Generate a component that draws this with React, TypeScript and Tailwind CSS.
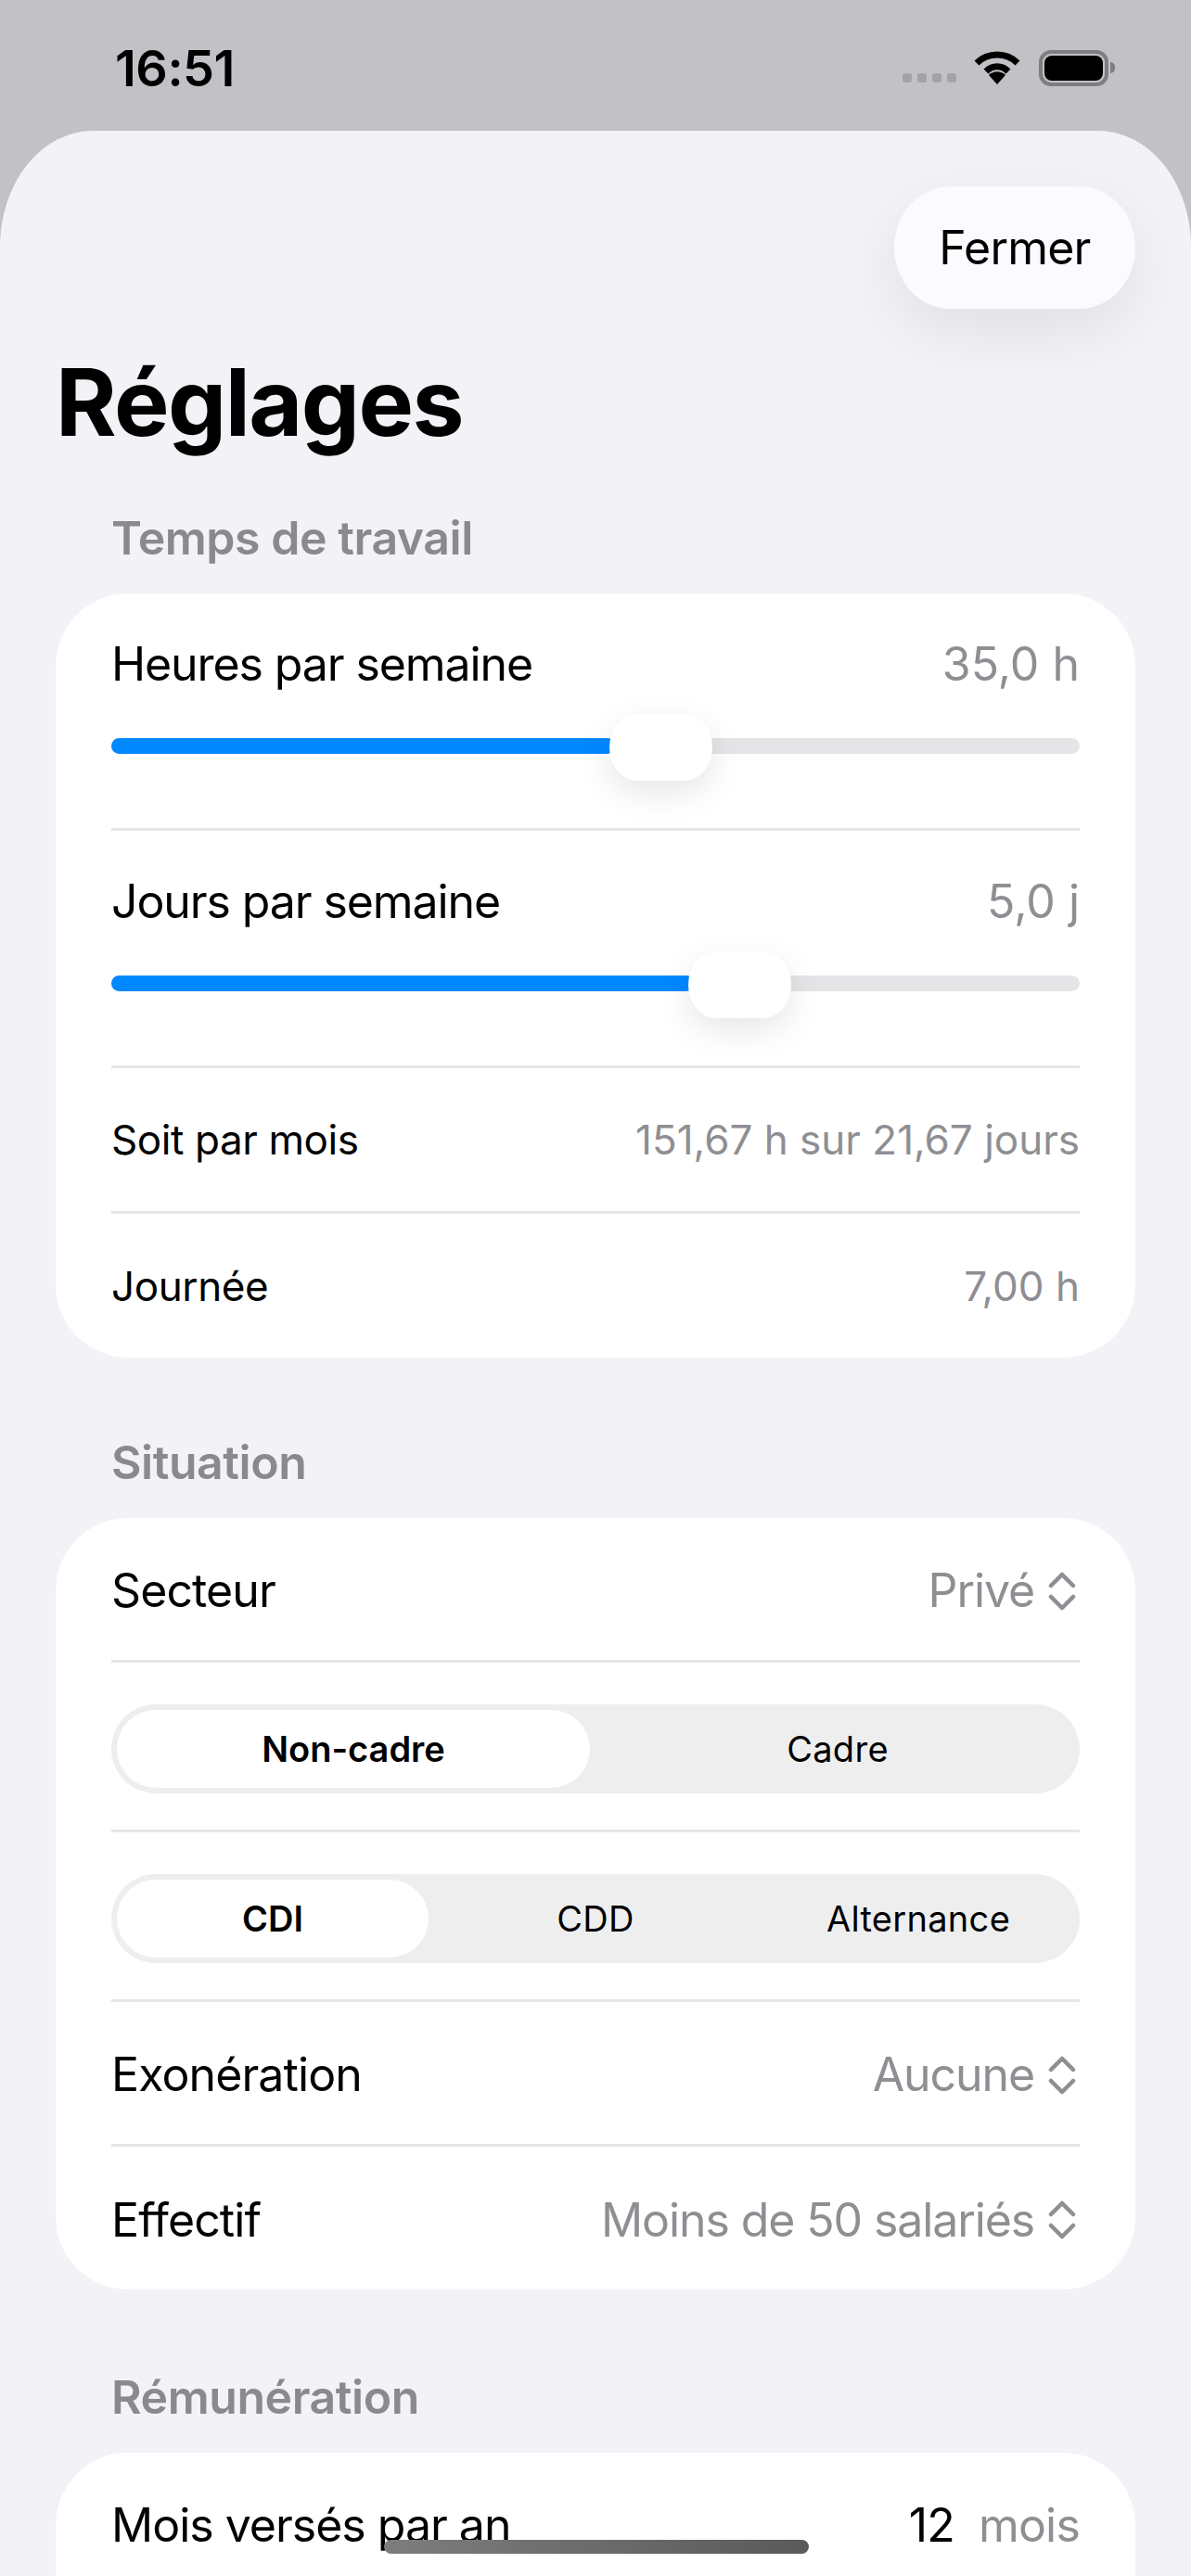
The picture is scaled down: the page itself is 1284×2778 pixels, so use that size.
import React from "react";

const font = { fontFamily: "Inter, 'Noto Sans', sans-serif" };

const Chevrons = () => (
  <svg width="30" height="42" viewBox="0 0 30 42" fill="none" stroke="#8e8e93" strokeWidth="4.5" strokeLinecap="round" strokeLinejoin="round" className="shrink-0">
    <path d="M3 15 L15 3 L27 15" />
    <path d="M3 27 L15 39 L27 27" />
  </svg>
);

const Divider = () => <div className="h-[3px] bg-[#e6e6e8]" />;

const SliderRow = ({ label, value, percent }: { label: string; value: string; percent: number }) => (
  <div className="h-[253px] pt-[46px]">
    <div className="flex h-[60px] items-center justify-between">
      <span className="text-[50px] text-black tracking-[-1.1px]">{label}</span>
      <span className="text-[50px] text-[#8e8e93] tracking-[0px]">{value}</span>
    </div>
    <div className="relative mt-[50px] h-[17px] rounded-full bg-[#e5e5e7]">
      <div className="h-full rounded-full bg-[#0088ff]" style={{ width: `${percent}%` }} />
      <div
        className="absolute top-[-26px] h-[72px] w-[111px] rounded-[30px/36px] bg-white shadow-[0_12px_36px_rgba(0,0,0,0.1)]"
        style={{ left: `${(percent / 100) * 1044 - 6}px` }}
      />
    </div>
  </div>
);

const InfoRow = ({ label, value, height }: { label: string; value: string; height: string }) => (
  <div className={`flex items-center justify-between ${height}`}>
    <span className="text-[44px] text-black tracking-[-0.4px]">{label}</span>
    <span className="text-[44px] text-[#8e8e93] tracking-[0px]">{value}</span>
  </div>
);

const PickerRow = ({ label, value, height }: { label: string; value: string; height: string }) => (
  <div className={`flex items-center justify-between pt-[4px] ${height}`}>
    <span className="text-[50px] text-black tracking-[-0.9px]">{label}</span>
    <span className="flex items-center gap-[15px] pr-[4px] text-[50px] text-[#8e8e93] tracking-[-1.1px]">
      {value}
      <Chevrons />
    </span>
  </div>
);

const Segmented = ({ items }: { items: string[] }) => (
  <div className="flex h-[180px] items-center pt-[6px]">
    <div className="flex h-[96px] w-full gap-[12px] rounded-[48px] bg-[#eeeeef] p-[6px]">
      {items.map((item, i) => (
        <div
          key={item}
          className={`flex flex-1 items-center justify-center rounded-[42px] text-[38px] text-black ${
            i === 0 ? "bg-white font-semibold" : "font-normal tracking-[0.3px]"
          }`}
        >
          {item}
        </div>
      ))}
    </div>
  </div>
);

const SectionLabel = ({ children }: { children: React.ReactNode }) => (
  <div className="mb-[29px] flex h-[60px] items-center pb-[2px] pl-[60px] text-[50px] font-semibold tracking-[-0.45px] text-[#8a8a8e]">
    {children}
  </div>
);

export default function App() {
  return (
    <div className="relative h-[2778px] w-[1284px] overflow-hidden bg-[#c2c1c6]" style={font}>
      {/* Status bar */}
      <div className="flex h-[141px] items-center justify-between pt-[5px] pl-[124px] pr-[82px]">
        <span className="text-[54px] font-semibold tracking-[-0.5px] text-black">16:51</span>
        <div className="flex items-center">
          <div className="mt-[22px] flex gap-[6px]">
            <span className="h-[10px] w-[10px] rounded-[3px] bg-[#a3a3a6]" />
            <span className="h-[10px] w-[10px] rounded-[3px] bg-[#a3a3a6]" />
            <span className="h-[10px] w-[10px] rounded-[3px] bg-[#a3a3a6]" />
            <span className="h-[10px] w-[10px] rounded-[3px] bg-[#a3a3a6]" />
          </div>
          <svg width="52" height="38" viewBox="0 0 52 38" fill="none" stroke="#000" className="ml-[18px]">
            <path d="M4 14 C16 2 36 2 48 14" strokeWidth="7" />
            <path d="M14 23 C21 16 31 16 38 23" strokeWidth="7" />
            <path d="M17 27 C22 22 30 22 35 27 L26 37 Z" fill="#000" stroke="none" />
          </svg>
          <div className="ml-[19px] flex items-center">
            <div className="h-[39px] w-[75px] rounded-[13px] border-[4px] border-[#7e7e81] p-[2px]">
              <div className="h-full w-full rounded-[8px] bg-black" />
            </div>
            <div className="ml-[2px] h-[12px] w-[5px] rounded-r-full bg-[#7e7e81]" />
          </div>
        </div>
      </div>

      {/* Sheet */}
      <div className="h-[2637px] rounded-t-[100px_125px] bg-[#f2f2f7] px-[60px] pt-[60px]">
        <div className="flex justify-end">
          <button className="flex h-[132px] w-[260px] items-center justify-center rounded-[60px/66px] bg-[#fafaff] text-[50px] tracking-[-0.8px] text-black shadow-[0_24px_70px_rgba(0,0,0,0.08)]">
            Fermer
          </button>
        </div>
        <h1 className="mb-[57px] mt-[41px] h-[120px] text-[100px] font-bold leading-[120px] tracking-[-1.5px] text-black">
          Réglages
        </h1>

        <SectionLabel>Temps de travail</SectionLabel>
        <div className="rounded-[78px] bg-white px-[60px]">
          <SliderRow label="Heures par semaine" value="35,0 h" percent={52} />
          <Divider />
          <SliderRow label="Jours par semaine" value="5,0 j" percent={60.2} />
          <Divider />
          <InfoRow label="Soit par mois" value="151,67 h sur 21,67 jours" height="h-[154px]" />
          <Divider />
          <InfoRow label="Journée" value="7,00 h" height="h-[155px]" />
        </div>

        <div className="h-[84px]" />
        <SectionLabel>Situation</SectionLabel>
        <div className="rounded-[78px] bg-white px-[60px]">
          <PickerRow label="Secteur" value="Privé" height="h-[153px]" />
          <Divider />
          <Segmented items={["Non-cadre", "Cadre"]} />
          <Divider />
          <Segmented items={["CDI", "CDD", "Alternance"]} />
          <Divider />
          <PickerRow label="Exonération" value="Aucune" height="h-[153px]" />
          <Divider />
          <PickerRow label="Effectif" value="Moins de 50 salariés" height="h-[154px]" />
        </div>

        <div className="h-[87px]" />
        <SectionLabel>Rémunération</SectionLabel>
        <div className="h-[300px] rounded-[78px] bg-white px-[60px]">
          <div className="flex h-[156px] items-center justify-between">
            <span className="text-[50px] tracking-[-1px] text-black">Mois versés par an</span>
            <span className="text-[50px] tracking-[-0.8px] text-[#8e8e93]">
              <span className="mr-[26px] text-black">12</span>mois
            </span>
          </div>
        </div>
      </div>

      {/* Home indicator */}
      <div className="absolute left-[414px] top-[2739px] h-[15px] w-[458px] rounded-[8px] bg-gradient-to-r from-[#7d7d7d] to-[#5a5a5a]" />
    </div>
  );
}
